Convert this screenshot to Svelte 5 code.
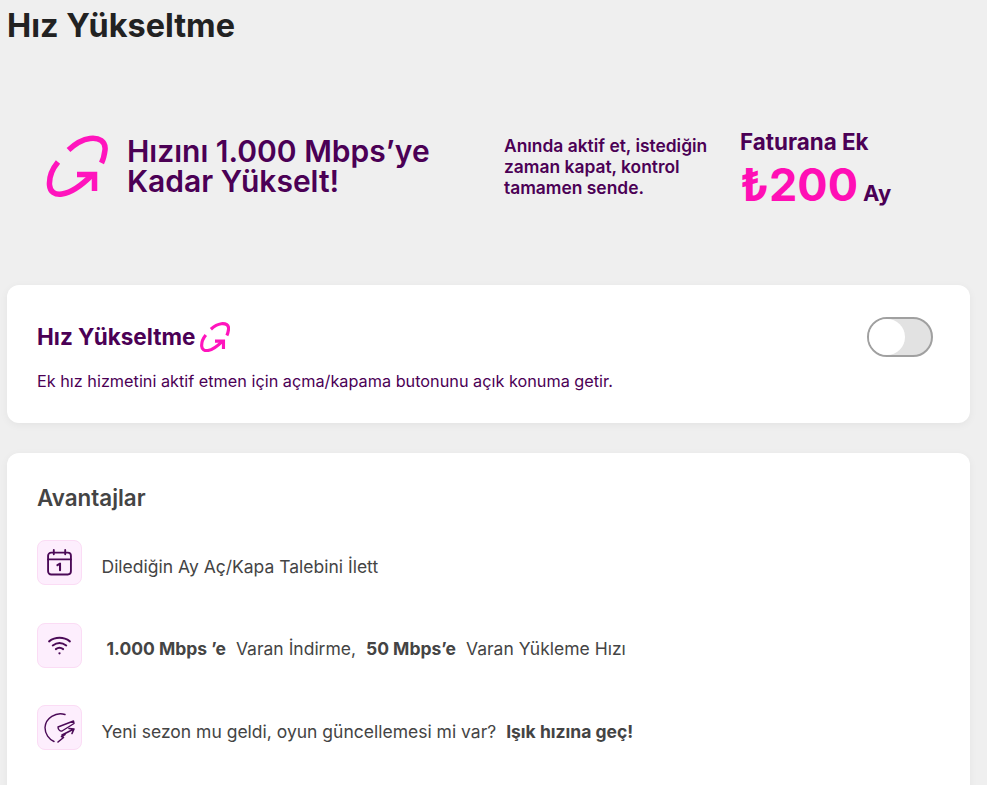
<script lang="ts">
	const advantages = [
		{ icon: 'calendar' },
		{ icon: 'wifi' },
		{ icon: 'speed' }
	];
</script>

<div class="page">
	<h1>Hız Yükseltme</h1>

	<section class="banner">
		<div class="banner-main">
			<svg class="boost-big" viewBox="0 0 62 62" fill="none" stroke="#ff14bd" stroke-width="5.500">
				<path d="M22.500 15C29 9 36 4.500 44 3.500C53 2.500 60 6 59 15C58.500 19 57.500 24 55.500 28" />
				<path d="M12 27C7 33 3 42 3.500 50C4 57 9 60 16 59C26 57.500 36 50 46 40" />
				<path d="M31 39.500H48.500V56" />
			</svg>
			<h2>Hızını 1.000 Mbps’ye<br />Kadar Yükselt!</h2>
		</div>
		<p class="banner-text">Anında aktif et, istediğin zaman kapat, kontrol tamamen sende.</p>
		<div class="price">
			<div class="price-label">Faturana Ek</div>
			<div class="price-row">
				<span class="amount">₺200</span>
				<span class="per">Ay</span>
			</div>
		</div>
	</section>

	<section class="card toggle-card">
		<div class="toggle-text">
			<div class="toggle-title">
				<span>Hız Yükseltme</span>
				<svg class="boost-small" viewBox="0 0 62 62" fill="none" stroke="#ff14bd" stroke-width="6.500">
					<path d="M22.500 15C29 9 36 4.500 44 3.500C53 2.500 60 6 59 15C58.500 19 57.500 24 55.500 28" />
					<path d="M12 27C7 33 3 42 3.500 50C4 57 9 60 16 59C26 57.500 36 50 46 40" />
					<path d="M31 39.500H48.500V56" />
				</svg>
			</div>
			<p>Ek hız hizmetini aktif etmen için açma/kapama butonunu açık konuma getir.</p>
		</div>
		<div class="switch"><div class="knob"></div></div>
	</section>

	<section class="card advantages">
		<h3>Avantajlar</h3>
		<ul>
			{#each advantages as item}
				<li>
					<span class="icon-box">
						{#if item.icon === 'calendar'}
							<svg viewBox="0 0 26 26" fill="none" stroke="#4b0a57" stroke-width="1.8" stroke-linecap="round">
								<rect x="2" y="3.500" width="22" height="21" rx="3" />
								<path d="M2 10H24M7.500 1V5M18.500 1V5" />
								<path d="M11 15.500L13.500 14V20.500" stroke-width="2" stroke-linejoin="round" />
							</svg>
						{:else if item.icon === 'wifi'}
							<svg viewBox="0 0 26 26" fill="none" stroke="#4b0a57" stroke-width="1.9" stroke-linecap="round">
								<path d="M3 9C9 4.500 17 4.500 23 9" />
								<path d="M6.500 13C10.500 10 15.500 10 19.500 13" />
								<path d="M9.500 16.500C11.500 15 14.500 15 16.500 16.500" />
								<circle cx="13" cy="20.500" r="1.100" fill="#4b0a57" stroke="none" />
							</svg>
						{:else}
							<svg class="speed" viewBox="0 0 32 32" fill="none" stroke="#4b0a57" stroke-width="1.400" stroke-linecap="round" stroke-linejoin="round">
								<path d="M21 2.500C12 -0.500 1.500 6 1 15.500C1 22 5 27.500 10 29.500" />
								<path d="M14 15L29.500 9L30 11.500L18 19C16 19.500 14 17.500 14 15Z" />
								<path d="M18 23L28 18M25 16.500L30 17L28 21.500" stroke-width="1.600" />
								<path d="M14 30L19.500 25.500L17.500 24.500L21 22.500" stroke-width="1.600" />
							</svg>
						{/if}
					</span>
					{#if item.icon === 'calendar'}
						<span class="adv-text">Dilediğin Ay Aç/Kapa Talebini İlett</span>
					{:else if item.icon === 'wifi'}
						<span class="adv-text"><b class="first">1.000 Mbps ’e</b> Varan İndirme, <b>50 Mbps’e</b> Varan Yükleme Hızı</span>
					{:else}
						<span class="adv-text">Yeni sezon mu geldi, oyun güncellemesi mi var? <b>Işık hızına geç!</b></span>
					{/if}
				</li>
			{/each}
		</ul>
	</section>
</div>

<style>
	:global(body) {
		background: #efefef;
		font-family: Inter, "Noto Sans", sans-serif;
	}

	.page {
		height: 785px;
		overflow: hidden;
		padding: 0 17px 0 7px;
	}

	h1 {
		margin: 0;
		padding-top: 8px;
		font-size: 32.400px;
		line-height: 36px;
		font-weight: 700;
		color: #222222;
	}

	.banner {
		display: flex;
		align-items: center;
		height: 241px;
		color: #4b0055;
	}

	.banner-main {
		display: flex;
		align-items: center;
		gap: 19px;
		width: 497px;
		padding-left: 39px;
		padding-top: 2px;
		box-sizing: border-box;
	}

	.boost-big {
		width: 62px;
		height: 62px;
		flex: none;
	}

	.banner-main h2 {
		margin: 0;
		font-size: 30px;
		line-height: 30px;
		font-weight: 600;
	}

	.banner-text {
		margin: 4px 32px 0 0;
		width: 204px;
		font-size: 17.400px;
		line-height: 21px;
		font-weight: 600;
	}

	.price {
		padding-top: 13px;
	}

	.price-label {
		font-size: 22.400px;
		line-height: 27px;
		font-weight: 700;
	}

	.price-row {
		display: flex;
		align-items: baseline;
		gap: 5px;
		margin-top: 1px;
	}

	.amount {
		font-size: 45px;
		line-height: 58px;
		font-weight: 700;
		color: #ff0fb5;
	}

	.per {
		font-size: 22px;
		font-weight: 700;
	}

	.card {
		background: #ffffff;
		border-radius: 12px;
		box-shadow: 0 2px 8px rgba(0, 0, 0, 0.05);
	}

	.toggle-card {
		display: flex;
		justify-content: space-between;
		align-items: flex-start;
		height: 138px;
		box-sizing: border-box;
		padding: 32px 37px 0 30px;
		margin-bottom: 30px;
	}

	.toggle-title {
		display: flex;
		align-items: center;
		gap: 5px;
		font-size: 22.500px;
		line-height: 40px;
		font-weight: 700;
		color: #4b0055;
	}

	.boost-small {
		width: 30px;
		height: 30px;
	}

	.toggle-text p {
		margin: 13px 0 0;
		font-size: 16.250px;
		line-height: 22px;
		color: #4b0055;
	}

	.switch {
		width: 66px;
		height: 40px;
		box-sizing: border-box;
		border: 2px solid #a0a0a0;
		border-radius: 20px;
		background: #e2e2e2;
	}

	.knob {
		width: 36px;
		height: 36px;
		border-radius: 50%;
		background: #ffffff;
	}

	.advantages {
		padding: 30px 30px 0;
		height: 360px;
	}

	h3 {
		margin: 0 0 27px;
		font-size: 22.400px;
		line-height: 30px;
		font-weight: 600;
		color: #444444;
	}

	ul {
		list-style: none;
		margin: 0;
		padding: 0;
		display: flex;
		flex-direction: column;
		gap: 37.500px;
	}

	li {
		display: flex;
		align-items: center;
		gap: 19.500px;
		font-size: 17.500px;
		color: #444444;
	}

	.adv-text {
		padding-top: 7px;
	}

	.icon-box {
		display: flex;
		align-items: center;
		justify-content: center;
		width: 45px;
		height: 45px;
		box-sizing: border-box;
		background: #fdeefd;
		border: 1px solid #fbdcf5;
		border-radius: 8px;
		flex: none;
	}

	.icon-box svg {
		width: 27px;
		height: 27px;
	}

	.icon-box svg.speed {
		width: 32px;
		height: 32px;
	}

	b {
		font-weight: 700;
		margin: 0 5px;
	}

	li:last-child b {
		margin-right: 0;
	}
</style>
